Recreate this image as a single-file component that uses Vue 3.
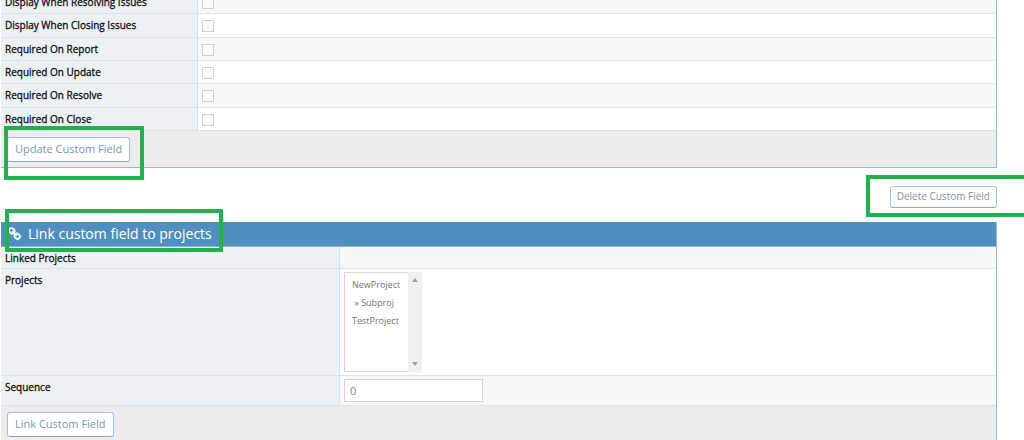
<script setup>
import { ref } from 'vue'

const flags = ref([
  { id: 'display_resolved', label: 'Display When Resolving Issues', checked: false },
  { id: 'display_closed', label: 'Display When Closing Issues', checked: false },
  { id: 'require_report', label: 'Required On Report', checked: false },
  { id: 'require_update', label: 'Required On Update', checked: false },
  { id: 'require_resolved', label: 'Required On Resolve', checked: false },
  { id: 'require_closed', label: 'Required On Close', checked: false },
])
const projects = ['NewProject', '\u00a0» Subproj', 'TestProject']
const selected = ref([])
const sequence = ref('0')
</script>

<template>
  <main class="page">
    <form class="panel edit-panel" @submit.prevent>
      <table class="fields flags">
        <tbody>
          <tr v-for="f in flags" :key="f.id">
            <th scope="row"><label :for="f.id">{{ f.label }}</label></th>
            <td><input :id="f.id" v-model="f.checked" class="check" type="checkbox" /></td>
          </tr>
        </tbody>
      </table>
      <div class="toolbox">
        <button class="btn" type="submit">Update Custom Field</button>
        <span class="mark mark-update"></span>
      </div>
    </form>

    <div class="delete-row">
      <button class="btn btn-small" type="button">Delete Custom Field</button>
      <span class="mark mark-delete"></span>
    </div>

    <form class="panel" @submit.prevent>
      <h4 class="header">
        <svg class="icon" viewBox="0 0 1792 1792" aria-hidden="true">
          <path fill="currentColor" stroke="currentColor" stroke-width="60" d="M1456 1216q0-40-28-68l-208-208q-28-28-68-28-42 0-72 32 3 3 19 18.5t21.5 21.5 15 19 13 25.5 3.5 27.5q0 40-28 68t-68 28q-15 0-27.5-3.5t-25.5-13-19-15-21.5-21.5-18.5-19q-33 31-33 73 0 40 28 68l206 207q27 27 68 27 40 0 68-26l147-146q28-28 28-67zm-703-705q0-40-28-68l-206-207q-28-28-68-28-39 0-68 27l-147 146q-28 28-28 67 0 40 28 68l208 208q27 27 68 27 42 0 72-31-3-3-19-18.5t-21.5-21.5-15-19-13-25.5-3.5-27.5q0-40 28-68t68-28q15 0 27.5 3.5t25.5 13 19 15 21.5 21.5 18.5 19q33-31 33-73zm895 705q0 120-85 203l-147 146q-83 83-203 83-121 0-204-85l-206-207q-83-83-83-203 0-123 88-209l-88-88q-86 88-208 88-120 0-204-84l-208-208q-84-84-84-204t85-203l147-146q83-83 203-83 121 0 204 85l206 207q83 83 83 203 0 123-88 209l88 88q86-88 208-88 120 0 204 84l208 208q84 84 84 204z" />
        </svg>
        <span>Link custom field to projects</span>
        <span class="mark mark-link"></span>
      </h4>
      <table class="fields links">
        <tbody>
          <tr>
            <th scope="row">Linked Projects</th>
            <td></td>
          </tr>
          <tr>
            <th scope="row"><label for="project_id">Projects</label></th>
            <td>
              <div class="listbox">
                <select id="project_id" v-model="selected" multiple size="5">
                  <option v-for="p in projects" :key="p" :value="p">{{ p }}</option>
                </select>
                <div class="scrollbar" aria-hidden="true">
                  <svg viewBox="0 0 6 4"><path d="M0 4L3 0L6 4Z" /></svg>
                  <svg viewBox="0 0 6 4"><path d="M0 0L3 4L6 0Z" /></svg>
                </div>
              </div>
            </td>
          </tr>
          <tr>
            <th scope="row"><label for="sequence">Sequence</label></th>
            <td><input id="sequence" v-model="sequence" class="text" type="text" /></td>
          </tr>
        </tbody>
      </table>
      <div class="toolbox">
        <button class="btn" type="submit">Link Custom Field</button>
      </div>
    </form>
  </main>
</template>

<style>
html {
  overflow: hidden;
}
</style>

<style scoped>
* {
  box-sizing: border-box;
}
.page {
  padding: 0 27px 0 1px;
  background: #fff;
  color: #111;
  font-family: "Open Sans", "Noto Sans", sans-serif;
  font-size: 10px;
  line-height: 14px;
}
.panel {
  border-right: 1px solid #8fbbe0;
  border-bottom: 1px solid #8fbbe0;
}
.edit-panel {
  margin-top: -9px;
}
.fields {
  width: 100%;
  table-layout: fixed;
  border-collapse: separate;
  border-spacing: 0;
}
.flags {
  height: 140px;
}
.fields th {
  padding: 4px 4px 3px;
  border-right: 1px solid #dddfe0;
  border-bottom: 1px solid #dfe1e2;
  background: #ebf1f4;
  font-weight: 400;
  -webkit-text-stroke: 0.3px #111;
  text-align: left;
  vertical-align: top;
}
.fields td {
  padding: 3px 4px;
  border-bottom: 1px solid #e2e2e2;
  vertical-align: top;
}
.fields tr:nth-child(odd) td {
  background: #f8f8f8;
}
.flags th {
  width: 197px;
}
.flags td {
  padding-top: 6px;
}
.links th {
  width: 339px;
}
.check {
  display: block;
  width: 12px;
  height: 12px;
  margin: 0;
  appearance: none;
  border: 1px solid #d0d0d0;
  background: #fafafa;
}
.check:checked {
  background: #6fb3e0;
}
.toolbox {
  position: relative;
  padding: 6px 6px 5px;
  background: #ededed;
}
.btn {
  display: block;
  height: 25px;
  padding: 0 7px 2px;
  border: 1px solid #a3c3dd;
  border-bottom-color: #7fabd0;
  border-radius: 3px;
  background: #fff;
  color: #7b95ae;
  font-family: inherit;
  font-size: 11px;
  line-height: 20px;
}
.btn-small {
  height: 22px;
  padding: 0 6px 2px;
  font-size: 10px;
  line-height: 18px;
}
.delete-row {
  position: relative;
  display: flex;
  justify-content: flex-end;
  padding: 18px 0 14px;
}
.header {
  position: relative;
  display: flex;
  align-items: center;
  gap: 6px;
  height: 25px;
  margin: 0;
  padding: 0 7px;
  border-bottom: 1px solid #8fb5d3;
  background: #4f8fc0;
  color: #fff;
  font-size: 14px;
  font-weight: 400;
  line-height: 24px;
}
.icon {
  width: 14px;
  height: 14px;
}
.listbox {
  display: flex;
  width: 78px;
  height: 100px;
}
.listbox select {
  flex: 1;
  min-width: 0;
  margin: 0;
  padding: 5px 0;
  overflow: hidden;
  appearance: none;
  border: 1px solid #d5d5d5;
  border-right: 0;
  border-radius: 0;
  background: #fff;
  color: #757575;
  font-family: inherit;
  font-size: 9px;
}
.listbox option {
  min-height: 18px;
  padding: 0 7px;
  line-height: 18px;
}
.scrollbar {
  display: flex;
  flex-direction: column;
  justify-content: space-between;
  align-items: center;
  width: 14px;
  padding: 6px 0;
  background: #f0f0f0;
}
.scrollbar svg {
  width: 6px;
  height: 4px;
  fill: #a3a3a3;
}
.text {
  display: block;
  width: 139px;
  height: 23px;
  margin: 0;
  padding: 0 5px;
  border: 1px solid #d5d5d5;
  border-radius: 0;
  background: #fff;
  color: #858585;
  font-family: inherit;
  font-size: 11px;
}
.mark {
  position: absolute;
  border: 4px solid #22b14c;
  pointer-events: none;
}
.mark-update {
  top: -5px;
  left: 3px;
  width: 140px;
  height: 54px;
}
.mark-delete {
  top: 7px;
  right: -31px;
  width: 162px;
  height: 42px;
}
.mark-link {
  top: -13px;
  left: 4px;
  width: 218px;
  height: 43px;
  z-index: 1;
}
</style>
